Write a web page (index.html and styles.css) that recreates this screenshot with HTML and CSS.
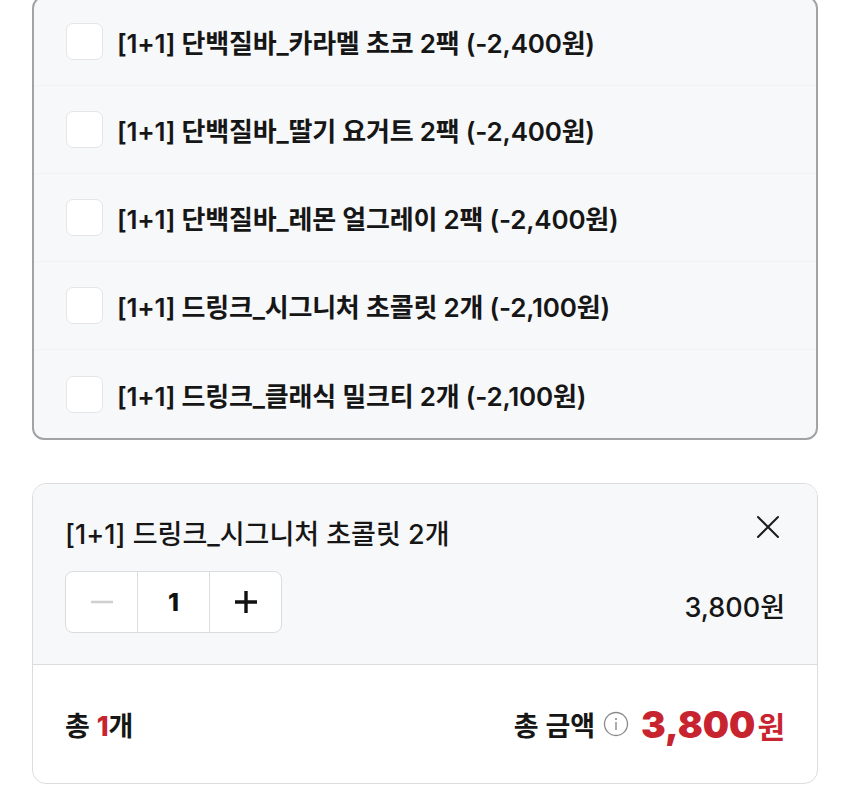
FILE: index.html
```html
<!DOCTYPE html>
<html lang="ko">
<head>
    <meta charset="UTF-8">
    <meta name="viewport" content="width=device-width, initial-scale=1.0">
    <title>옵션 선택</title>
    <link rel="stylesheet" href="styles.css">
</head>
<body>
    <div class="page">
        <ul class="option-list">
            <li class="option">
                <span class="check"></span>
                <span class="option-name">[1+1] 단백질바_카라멜 초코 2팩 (-2,400원)</span>
            </li>
            <li class="option">
                <span class="check"></span>
                <span class="option-name">[1+1] 단백질바_딸기 요거트 2팩 (-2,400원)</span>
            </li>
            <li class="option">
                <span class="check"></span>
                <span class="option-name">[1+1] 단백질바_레몬 얼그레이 2팩 (-2,400원)</span>
            </li>
            <li class="option">
                <span class="check"></span>
                <span class="option-name">[1+1] 드링크_시그니처 초콜릿 2개 (-2,100원)</span>
            </li>
            <li class="option">
                <span class="check"></span>
                <span class="option-name">[1+1] 드링크_클래식 밀크티 2개 (-2,100원)</span>
            </li>
        </ul>

        <div class="cart">
            <div class="cart-item">
                <div class="item-head">
                    <span class="item-name">[1+1] 드링크_시그니처 초콜릿 2개</span>
                    <button class="remove" aria-label="삭제">
                        <svg width="26" height="26" viewBox="0 0 26 26">
                            <path d="M3 3L23 23M23 3L3 23" stroke="#1c1c1c" stroke-width="2" stroke-linecap="round"/>
                        </svg>
                    </button>
                </div>
                <div class="item-body">
                    <div class="stepper">
                        <button class="step">
                            <svg width="24" height="24" viewBox="0 0 24 24">
                                <path d="M1 12H23" stroke="#cfcfd2" stroke-width="2.5"/>
                            </svg>
                        </button>
                        <span class="qty">1</span>
                        <button class="step">
                            <svg width="24" height="24" viewBox="0 0 24 24">
                                <path d="M1 12H23M12 1V23" stroke="#111" stroke-width="3.4"/>
                            </svg>
                        </button>
                    </div>
                    <span class="item-price">3,800원</span>
                </div>
            </div>
            <div class="summary">
                <span class="count">총 <b>1</b>개</span>
                <div class="total">
                    <span class="total-label">총 금액</span>
                    <svg class="info" width="26" height="26" viewBox="0 0 26 26">
                        <circle cx="13" cy="13" r="11.5" fill="none" stroke="#8a8a8e" stroke-width="1.3"/>
                        <circle cx="13" cy="8" r="1.1" fill="#8a8a8e"/>
                        <path d="M13 11V19" stroke="#8a8a8e" stroke-width="1.4"/>
                    </svg>
                    <span class="total-price">3,800<small>원</small></span>
                </div>
            </div>
        </div>
    </div>
</body>
</html>
```

FILE: styles.css
```css
body {
    margin: 0;
    background: #fff;
    font-family: Inter, "Noto Sans CJK KR", sans-serif;
    color: #161616;
}

.page {
    padding: 0 32px;
    margin-top: -4px;
}

.option-list {
    list-style: none;
    margin: 0;
    padding: 0;
    background: #f7f8fa;
    border: 2px solid #a3a3a6;
    border-radius: 12px;
}

.option {
    display: flex;
    align-items: center;
    gap: 14px;
    height: 88px;
    padding: 0 32px;
    border-bottom: 1px solid #f1f2f4;
    box-sizing: border-box;
}

.option:last-child {
    border-bottom: none;
}

.check {
    width: 35px;
    height: 35px;
    background: #fff;
    border: 1px solid #e6e6e8;
    border-radius: 7px;
    flex-shrink: 0;
}

.option-name {
    font-size: 26px;
    font-weight: 600;
    letter-spacing: -0.2px;
}

.cart {
    margin-top: 43px;
    border: 1.5px solid #dcdcde;
    border-radius: 14px;
    overflow: hidden;
}

.cart-item {
    background: #f7f8fa;
    padding: 31px 32px 31px;
    border-bottom: 1.5px solid #dcdcde;
}

.item-head {
    display: flex;
    justify-content: space-between;
    align-items: center;
    height: 34px;
}

.item-name {
    font-size: 27px;
    font-weight: 500;
}

.remove {
    border: none;
    background: none;
    padding: 0;
    margin-right: 4px;
    margin-top: -10px;
    display: flex;
}

.item-body {
    display: flex;
    justify-content: space-between;
    align-items: center;
    margin-top: 22px;
}

.stepper {
    display: flex;
    height: 62px;
    background: #fff;
    border: 1.5px solid #dcdcde;
    border-radius: 8px;
    box-sizing: border-box;
}

.step,
.qty {
    width: 71px;
    display: flex;
    align-items: center;
    justify-content: center;
}

.step {
    border: none;
    background: none;
    padding: 0;
}

.qty {
    border-left: 1.5px solid #dcdcde;
    border-right: 1.5px solid #dcdcde;
    font-size: 25px;
    font-weight: 800;
    color: #111;
}

.item-price {
    font-size: 27px;
    font-weight: 500;
    margin-top: 6px;
}

.summary {
    display: flex;
    justify-content: space-between;
    align-items: center;
    height: 118px;
    padding: 0 32px;
}

.count {
    font-size: 27px;
    font-weight: 600;
}

.count b {
    color: #c8242f;
    font-weight: 800;
}

.total {
    display: flex;
    align-items: center;
}

.total-label {
    font-size: 27px;
    font-weight: 600;
}

.info {
    margin: 0 12px 0 8px;
}

.total-price {
    font-size: 37px;
    font-weight: 900;
    color: #c8242f;
}

.total-price small {
    font-size: 30px;
    font-weight: 700;
    margin-left: 2px;
}
```
